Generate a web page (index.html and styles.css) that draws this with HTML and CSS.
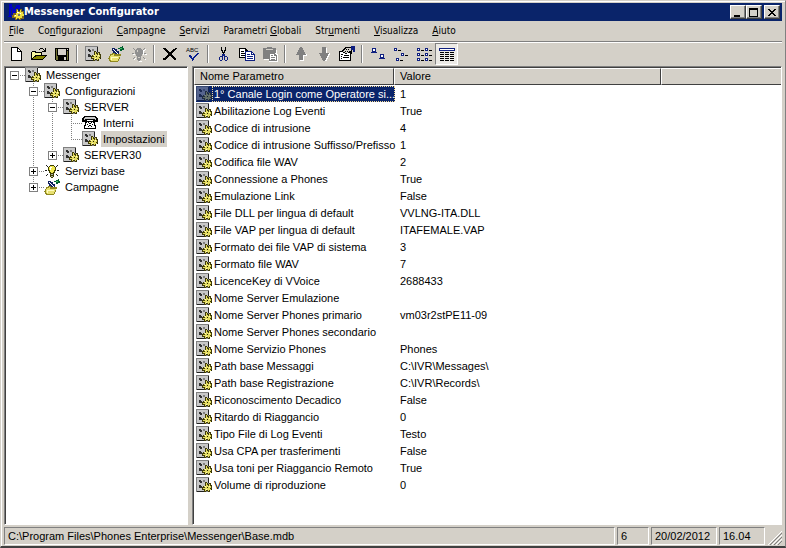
FILE: index.html
```html
<!DOCTYPE html>
<html lang="it">
<head>
    <meta charset="utf-8">
    <title>Messenger Configurator</title>
    <meta name="viewport" content="width=device-width, initial-scale=1">
    <link rel="stylesheet" href="styles.css">
</head>
<body>
    <svg class="sprite" width="0" height="0">
        <symbol id="gear" viewBox="0 0 16 16">
            <path fill="#808080" d="M0 0h13v15H0z"/>
            <path fill="#c8c8c8" d="M1 1h11v13H1z"/>
            <path fill="#202020" d="M12 1h1v5h-1zM1 14h7v1H1z"/>
            <path fill="#303030" d="M3 3h2v1h1v2H4V5H3zM3 8h2v1h1v2H3z"/>
            <path fill="#808080" d="M7 3h2v2H7z"/>
            <path fill="#403c08" d="M9 5h2v1h1v1h1V6h2v2h1v5h-2v2h-2v-1h-2v1H8v-2H6v-3h1V9h2z"/>
            <path fill="#e4dc60" d="M10 6h1v2h1v1h1V7h1v2h1v2h-1v1h1v1h-2v1h-1v-1h-2v1H9v-2H7v-1h2v-1H8V9h2z"/>
            <path fill="#fffcc0" d="M9 9h1v1H9zM13 9h1v1h-1zM10 12h1v1h-1z"/>
            <path fill="#202000" d="M11 10h1v1h-1zM15 12h1v1h-1z"/>
        </symbol>
        <symbol id="phone" viewBox="0 0 16 16">
            <path fill="#000" d="M2 1h12v1h1v1h1v4h-4V5H4v2H0V3h1V2h1z"/>
            <path fill="#c8c8c8" d="M3 2h10v1h1v2h-1V4H3v1H2V3h1z"/>
            <path fill="#000" d="M4 5h1v1h6V5h1v2h1v3h1v4H2v-4h1V7h1z"/>
            <path fill="#fff" d="M5 7h6v1h1v3h1v2H3v-2h1V8h1z"/>
            <path fill="#000" d="M6 7h1v1H6zM9 7h1v1H9zM7 8h2v1H7zM5 9h1v1H5zM10 9h1v1h-1zM7 10h2v1H7zM6 11h1v1H6zM9 11h1v1H9z"/>
        </symbol>
        <symbol id="bulb" viewBox="0 0 16 16">
            <path fill="#202020" d="M2 2h1v1h1v1H3V3H2zM12 3h1V2h1v1h-1v1h-1zM1 7h2v1H1zM13 7h2v1h-2zM2 12h1v-1h1v1H3v1H2zM12 11h1v1h1v1h-1v-1h-1z"/>
            <path fill="#404000" d="M6 2h4v1h1v1h1v4h-1v2h-1v4H9v1H7v-1H6v-4H5V8H4V4h1V3h1z"/>
            <path fill="#f0e850" d="M6 3h4v1h1v3h-1v2H9v1H7V9H6V7H5V4h1z"/>
            <path fill="#fff" d="M6 4h2v1H7v2H6z"/>
            <path fill="#b0b0b0" d="M7 11h2v1H7zM7 13h2v1H7z"/>
        </symbol>
        <symbol id="bulb-off" viewBox="0 0 16 16">
            <path fill="#fff" d="M3 3h1v1h1v1H4V4H3zM13 4h1V3h1v1h-1v1h-1zM2 8h2v1H2zM14 8h2v1h-2zM3 13h1v-1h1v1H4v1H3zM13 12h1v1h1v1h-1v-1h-1zM12 4h1v5h-1v2h-1v4H8v1h3v-5h1z"/>
            <path fill="#909090" d="M2 2h1v1h1v1H3V3H2zM12 3h1V2h1v1h-1v1h-1zM1 7h2v1H1zM13 7h2v1h-2zM2 12h1v-1h1v1H3v1H2zM12 11h1v1h1v1h-1v-1h-1z"/>
            <path fill="#909090" d="M6 2h4v1h1v1h1v4h-1v2h-1v4H9v1H7v-1H6v-4H5V8H4V4h1V3h1z"/>
            <path fill="#d4d0c8" d="M7 11h2v1H7zM6 4h1v2H6z"/>
        </symbol>
        <symbol id="campaign" viewBox="0 0 16 16">
            <path fill="#102060" d="M4 2h3v1h2v2h2v3h1v2H7V7H5V5H4z"/>
            <path fill="#fff" d="M5 3h1v1H5zM7 5h1v1H7zM6 4h1v1H6zM9 7h1v1H9zM8 6h1v1H8z"/>
            <path fill="#006030" d="M10 2h2V1h2V0h1v2h1v2h-2v1h-2V3h-2z"/>
            <path fill="#40c060" d="M12 2h2v1h-2z"/>
            <path fill="#908820" d="M0 12h1v-2h1V8h2V7h3v1h6v2h-1v3h-1v2h-1v1H2v-1H1v-2H0z"/>
            <path fill="#e8e070" d="M2 10h1V9h2V8h1v2h6v1h-1v2h-1v2H3v-1H2z"/>
            <path fill="#fffcc0" d="M3 11h7v1H4v2H3z"/>
        </symbol>
        <symbol id="app" viewBox="0 0 16 16">
            <path fill="#0000c8" d="M1 0h3v3h1v2h2V3h1V1h4v4h-2V4H9v3H7v1h2v4H4V5H3v7h2v1H0v-1h1V2z"/>
            <path fill="#806820" d="M8 5h2v2h2V5h2v2h2v8h-3v1h-2v-1H9v1H7v-2H4v-3h1V9h3z"/>
            <path fill="#f0e040" d="M9 6h1v2h2V6h1v2h2v2h1v2h-2v2h-2v1h-1v-1H9v1H8v-2H6v-2h2V9h1z"/>
            <path fill="#fff" d="M9 8h2v1H9zM12 9h1v1h-1zM7 11h1v1H7z"/>
            <path fill="#707070" d="M10 10h2v2h-2z"/>
        </symbol>
        <symbol id="new" viewBox="0 0 16 16">
            <path fill="#000" d="M3 1h7v1h1v1h1v1h1v1h1v10H3z"/>
            <path fill="#fff" d="M4 2h5v4h4v8H4zM10 3h1v1h1v1h-2z"/>
        </symbol>
        <symbol id="open" viewBox="0 0 16 16">
            <path fill="#000" d="M9 2h3v1h1v1h1V2h1v4h-4V5h2V4h-1V3H9v1H8V3h1zM1 5h4v1h6v3h5v1h-1v1h-1v1h-1v1h-1v1H0V6h1z"/>
            <path fill="#f8f8a0" d="M1 6h3v1h6v2H4v1H3v1H2v1H1z"/>
            <path fill="#848400" d="M5 10h9v1h-1v1h-1v1H2v-1h1v-1h2z"/>
        </symbol>
        <symbol id="save" viewBox="0 0 16 16">
            <path fill="#000" d="M1 2h14v13H2v-1H1z"/>
            <path fill="#707030" d="M2 3h1v7h1v1h8v-1h1V5h1v9H2z"/>
            <path fill="#d4d0c8" d="M4 3h8v6H4zM13 3h1v1h-1z"/>
            <path fill="#000" d="M4 10h9v4H4z"/>
            <path fill="#d4d0c8" d="M10 11h2v3h-2z"/>
        </symbol>
        <symbol id="delete" viewBox="0 0 16 16">
            <path fill="#000" d="M1 2h3v1h1v1h1v1h1v1h2V5h1V4h1V3h2V2h2v1h-1v1h-1v1h-1v1h-1v1h-1v2h1v1h1v1h1v1h1v2h-2v-1h-1v-1h-1v-1h-1v-1H7v1H6v1H5v1H4v1H1v-2h2v-1h1v-1h1V9h1V7H5V6H4V5H3V4H2V3H1z"/>
        </symbol>
        <symbol id="spell" viewBox="0 0 16 16">
            <text x="1" y="6" font-family="Liberation Sans, sans-serif" font-size="6" fill="#000">ABC</text>
            <path fill="#0a2090" d="M4 9h2v1h1v2h1v-1h1v-1h1V9h1V8h1V7h2v1h-1v1h-1v1h-1v1h-1v1h-1v2H8v1H7v-2H6v-1H5v-1H4z"/>
        </symbol>
        <symbol id="cut" viewBox="0 0 16 16">
            <path fill="#000" d="M5 1h1v3h1v2h1V4h1V1h1v4H9v2H8v2H7V7H6V5H5z"/>
            <path fill="#102080" d="M6 8h3v2h2v1h1v3h-1v1H9v-1H8v-4H7v4H6v1H4v-1H3v-3h1v-1h2z"/>
            <path fill="#d4d0c8" d="M4 11h2v3H4zM9 11h2v3H9z"/>
        </symbol>
        <symbol id="copy" viewBox="0 0 16 16">
            <path fill="#000" d="M0 2h7v1h1v1h1v8H0z"/>
            <path fill="#fff" d="M1 3h5v3h2v5H1z"/>
            <path fill="#000" d="M2 5h3v1H2zM2 7h4v1H2zM2 9h4v1H2z"/>
            <path fill="#102080" d="M6 5h7v1h1v1h1v1h1v7H6z"/>
            <path fill="#fff" d="M7 6h5v3h3v5H7zM13 7h1v1h-1z"/>
            <path fill="#102080" d="M8 8h3v1H8zM8 10h6v1H8zM8 12h6v1H8z"/>
        </symbol>
        <symbol id="paste" viewBox="0 0 16 16">
            <path fill="#fff" d="M14 4h1v4h1v8H7v-2H2v-1h5z"/>
            <path fill="#808080" d="M1 2h4V1h5v1h4v5H7v6H1V3z"/>
            <path fill="#d4d0c8" d="M4 3h7v1H4z"/>
            <path fill="#808080" d="M7 7h6v1h1v1h1v6H7z"/>
            <path fill="#fff" d="M8 8h4v2h2v4H8z"/>
            <path fill="#808080" d="M9 9h2v1H9zM9 11h4v1H9zM9 13h4v1H9z"/>
        </symbol>
        <symbol id="up" viewBox="0 0 16 16">
            <path fill="#fff" d="M9 2h1v2h1v2h1v2h2v2h-3v5H7v-1h3V9z"/>
            <path fill="#808080" d="M7 1h2v1h1v2h1v2h1v2h1v1h-3v5H6V9H3V8h1V6h1V4h1V2h1z"/>
        </symbol>
        <symbol id="down" viewBox="0 0 16 16">
            <path fill="#fff" d="M10 2h1v5h3v2h-1v2h-1v2h-1v2H9v-1h1z"/>
            <path fill="#808080" d="M6 1h4v6h3v1h-1v2h-1v2h-1v2H9v1H7v-1H6v-2H5v-2H4V8H3V7h3z"/>
        </symbol>
        <symbol id="props" viewBox="0 0 16 16">
            <path fill="#000" d="M0 5h3V4h1V3h1V2h1V1h7v7h-1v7H0z"/>
            <path fill="#fff" d="M1 6h3v1h2v1h2V7h3v7H1z"/>
            <path fill="#d4d0c8" d="M4 5h1V4h1V3h1V2h5v3h-2v1H9v1H6V6H4z"/>
            <path fill="#000" d="M7 3h1v1H7zM9 3h1v1H9zM6 5h1v1H6zM8 5h1v1H8zM2 8h2v1H2zM5 9h5v1H5zM2 10h1v1H2zM4 11h6v1H4zM2 12h1v1H2z"/>
            <path fill="#102080" d="M12 0h4v6h-2V4h-2z"/>
        </symbol>
        <symbol id="large" viewBox="0 0 16 16">
            <path fill="#102080" d="M2 2h4v4h1v1H1V6h1zM10 8h4v4h1v1H9v-1h1z"/>
            <path fill="#fff" d="M3 3h2v2H3zM11 9h2v2h-2z"/>
        </symbol>
        <symbol id="small" viewBox="0 0 16 16">
            <path fill="#102080" d="M1 2h3v3H1zM8 7h3v3H8zM3 12h3v3H3z"/>
            <path fill="#fff" d="M2 3h1v1H2zM9 8h1v1H9zM4 13h1v1H4z"/>
            <path fill="#000" d="M5 4h3v1H5zM12 9h3v1h-3zM7 14h3v1H7z"/>
        </symbol>
        <symbol id="list" viewBox="0 0 16 16">
            <path fill="#102080" d="M1 2h3v3H1zM9 2h3v3H9zM1 7h3v3H1zM9 7h3v3H9zM1 12h3v3H1zM9 12h3v3H9z"/>
            <path fill="#fff" d="M2 3h1v1H2zM10 3h1v1h-1zM2 8h1v1H2zM10 8h1v1h-1zM2 13h1v1H2zM10 13h1v1h-1z"/>
            <path fill="#000" d="M5 4h3v1H5zM13 4h3v1h-3zM5 9h3v1H5zM13 9h3v1h-3zM5 14h3v1H5zM13 14h3v1h-3z"/>
        </symbol>
        <symbol id="details" viewBox="0 0 16 16">
            <path fill="#102080" d="M0 2h16v3H0z"/>
            <path fill="#fff" d="M1 3h14v1H1z"/>
            <path fill="#000" d="M1 6h4v1H1zM6 6h4v1H6zM11 6h4v1h-4zM1 8h4v1H1zM6 8h4v1H6zM11 8h4v1h-4zM1 10h4v1H1zM6 10h4v1H6zM11 10h4v1h-4zM1 12h4v1H1zM6 12h4v1H6zM11 12h4v1h-4zM1 14h4v1H1zM6 14h4v1H6zM11 14h4v1h-4z"/>
        </symbol>
    </svg>

    <div class="window">
        <header class="titlebar">
            <svg class="icon"><use href="#app"/></svg>
            <h1>Messenger Configurator</h1>
            <button class="caption" aria-label="Riduci a icona"><svg width="10" height="9"><path d="M1 7h6v2H1z"/></svg></button>
            <button class="caption" aria-label="Ingrandisci"><svg width="10" height="9"><path d="M0 0h9v9H0zM1 2v6h7V2z" fill-rule="evenodd"/></svg></button>
            <button class="caption close" aria-label="Chiudi"><svg width="10" height="9"><path d="M1 1h2v1h1v1h2V2h1V1h2v1H8v1H7v1H6v1h1v1h1v1h1v1H7V7H6V6H4v1H3v1H1V7h1V6h1V5h1V4H3V3H2V2H1z"/></svg></button>
        </header>

        <nav class="menu">
            <button><u>F</u>ile</button>
            <button>Co<u>n</u>figurazioni</button>
            <button><u>C</u>ampagne</button>
            <button><u>S</u>ervizi</button>
            <button>Parametri <u>G</u>lobali</button>
            <button>Str<u>u</u>menti</button>
            <button><u>V</u>isualizza</button>
            <button><u>A</u>iuto</button>
        </nav>

        <div class="toolbar">
            <button aria-label="Nuovo"><svg class="icon"><use href="#new"/></svg></button>
            <button aria-label="Apri"><svg class="icon"><use href="#open"/></svg></button>
            <button aria-label="Salva"><svg class="icon"><use href="#save"/></svg></button>
            <span class="sep"></span>
            <button aria-label="Configurazione"><svg class="icon"><use href="#gear"/></svg></button>
            <button aria-label="Campagna"><svg class="icon"><use href="#campaign"/></svg></button>
            <button aria-label="Servizio" disabled><svg class="icon"><use href="#bulb-off"/></svg></button>
            <span class="sep"></span>
            <button aria-label="Elimina"><svg class="icon"><use href="#delete"/></svg></button>
            <button aria-label="Rinomina"><svg class="icon"><use href="#spell"/></svg></button>
            <span class="sep"></span>
            <button aria-label="Taglia"><svg class="icon"><use href="#cut"/></svg></button>
            <button aria-label="Copia"><svg class="icon"><use href="#copy"/></svg></button>
            <button aria-label="Incolla" disabled><svg class="icon"><use href="#paste"/></svg></button>
            <span class="sep"></span>
            <button aria-label="Su" disabled><svg class="icon"><use href="#up"/></svg></button>
            <button aria-label="Giù" disabled><svg class="icon"><use href="#down"/></svg></button>
            <button aria-label="Proprietà"><svg class="icon"><use href="#props"/></svg></button>
            <span class="sep"></span>
            <button aria-label="Icone grandi"><svg class="icon"><use href="#large"/></svg></button>
            <button aria-label="Icone piccole"><svg class="icon"><use href="#small"/></svg></button>
            <button aria-label="Elenco"><svg class="icon"><use href="#list"/></svg></button>
            <button class="pressed" aria-label="Dettagli"><svg class="icon"><use href="#details"/></svg></button>
        </div>

        <main class="content">
            <div class="panel tree">
                <ul>
                    <li>
                        <div class="node"><span class="branch"><button class="toggle open" aria-label="Comprimi"></button></span><svg class="icon"><use href="#gear"/></svg><span class="label">Messenger</span></div>
                        <ul>
                            <li>
                                <div class="node"><span class="branch"><button class="toggle open" aria-label="Comprimi"></button></span><svg class="icon"><use href="#gear"/></svg><span class="label">Configurazioni</span></div>
                                <ul>
                                    <li>
                                        <div class="node"><span class="branch"><button class="toggle open" aria-label="Comprimi"></button></span><svg class="icon"><use href="#gear"/></svg><span class="label">SERVER</span></div>
                                        <ul>
                                            <li><div class="node"><span class="branch"></span><svg class="icon"><use href="#phone"/></svg><span class="label">Interni</span></div></li>
                                            <li><div class="node"><span class="branch"></span><svg class="icon"><use href="#gear"/></svg><span class="label current">Impostazioni</span></div></li>
                                        </ul>
                                    </li>
                                    <li>
                                        <div class="node"><span class="branch"><button class="toggle" aria-label="Espandi"></button></span><svg class="icon"><use href="#gear"/></svg><span class="label">SERVER30</span></div>
                                    </li>
                                </ul>
                            </li>
                            <li>
                                <div class="node"><span class="branch"><button class="toggle" aria-label="Espandi"></button></span><svg class="icon"><use href="#bulb"/></svg><span class="label">Servizi base</span></div>
                            </li>
                            <li>
                                <div class="node"><span class="branch"><button class="toggle" aria-label="Espandi"></button></span><svg class="icon"><use href="#campaign"/></svg><span class="label">Campagne</span></div>
                            </li>
                        </ul>
                    </li>
                </ul>
            </div>

            <div class="panel list">
                <table>
                    <colgroup>
                        <col class="col-name">
                        <col class="col-value">
                        <col>
                    </colgroup>
                    <thead>
                        <tr><th>Nome Parametro</th><th>Valore</th><th></th></tr>
                    </thead>
                    <tbody>
                        <tr class="selected"><td><div class="item"><svg class="icon"><use href="#gear"/></svg><span>1° Canale Login come Operatore si...</span></div></td><td>1</td><td></td></tr>
                        <tr><td><div class="item"><svg class="icon"><use href="#gear"/></svg><span>Abilitazione Log Eventi</span></div></td><td>True</td><td></td></tr>
                        <tr><td><div class="item"><svg class="icon"><use href="#gear"/></svg><span>Codice di intrusione</span></div></td><td>4</td><td></td></tr>
                        <tr><td><div class="item"><svg class="icon"><use href="#gear"/></svg><span>Codice di intrusione Suffisso/Prefisso</span></div></td><td>1</td><td></td></tr>
                        <tr><td><div class="item"><svg class="icon"><use href="#gear"/></svg><span>Codifica file WAV</span></div></td><td>2</td><td></td></tr>
                        <tr><td><div class="item"><svg class="icon"><use href="#gear"/></svg><span>Connessione a Phones</span></div></td><td>True</td><td></td></tr>
                        <tr><td><div class="item"><svg class="icon"><use href="#gear"/></svg><span>Emulazione Link</span></div></td><td>False</td><td></td></tr>
                        <tr><td><div class="item"><svg class="icon"><use href="#gear"/></svg><span>File DLL per lingua di default</span></div></td><td>VVLNG-ITA.DLL</td><td></td></tr>
                        <tr><td><div class="item"><svg class="icon"><use href="#gear"/></svg><span>File VAP per lingua di default</span></div></td><td>ITAFEMALE.VAP</td><td></td></tr>
                        <tr><td><div class="item"><svg class="icon"><use href="#gear"/></svg><span>Formato dei file VAP di sistema</span></div></td><td>3</td><td></td></tr>
                        <tr><td><div class="item"><svg class="icon"><use href="#gear"/></svg><span>Formato file WAV</span></div></td><td>7</td><td></td></tr>
                        <tr><td><div class="item"><svg class="icon"><use href="#gear"/></svg><span>LicenceKey di VVoice</span></div></td><td>2688433</td><td></td></tr>
                        <tr><td><div class="item"><svg class="icon"><use href="#gear"/></svg><span>Nome Server Emulazione</span></div></td><td></td><td></td></tr>
                        <tr><td><div class="item"><svg class="icon"><use href="#gear"/></svg><span>Nome Server Phones primario</span></div></td><td>vm03r2stPE11-09</td><td></td></tr>
                        <tr><td><div class="item"><svg class="icon"><use href="#gear"/></svg><span>Nome Server Phones secondario</span></div></td><td></td><td></td></tr>
                        <tr><td><div class="item"><svg class="icon"><use href="#gear"/></svg><span>Nome Servizio Phones</span></div></td><td>Phones</td><td></td></tr>
                        <tr><td><div class="item"><svg class="icon"><use href="#gear"/></svg><span>Path base Messaggi</span></div></td><td>C:\IVR\Messages\</td><td></td></tr>
                        <tr><td><div class="item"><svg class="icon"><use href="#gear"/></svg><span>Path base Registrazione</span></div></td><td>C:\IVR\Records\</td><td></td></tr>
                        <tr><td><div class="item"><svg class="icon"><use href="#gear"/></svg><span>Riconoscimento Decadico</span></div></td><td>False</td><td></td></tr>
                        <tr><td><div class="item"><svg class="icon"><use href="#gear"/></svg><span>Ritardo di Riaggancio</span></div></td><td>0</td><td></td></tr>
                        <tr><td><div class="item"><svg class="icon"><use href="#gear"/></svg><span>Tipo File di Log Eventi</span></div></td><td>Testo</td><td></td></tr>
                        <tr><td><div class="item"><svg class="icon"><use href="#gear"/></svg><span>Usa CPA per trasferimenti</span></div></td><td>False</td><td></td></tr>
                        <tr><td><div class="item"><svg class="icon"><use href="#gear"/></svg><span>Usa toni per Riaggancio Remoto</span></div></td><td>True</td><td></td></tr>
                        <tr><td><div class="item"><svg class="icon"><use href="#gear"/></svg><span>Volume di riproduzione</span></div></td><td>0</td><td></td></tr>
                    </tbody>
                </table>
            </div>
        </main>

        <footer class="statusbar">
            <span class="path">C:\Program Files\Phones Enterprise\Messenger\Base.mdb</span>
            <span class="count">6</span>
            <span class="date">20/02/2012</span>
            <span class="time">16.04</span>
            <svg class="grip" width="15" height="15" viewBox="0 0 15 15">
                <path stroke="#fff" d="M1 15L15 1M5 15L15 5M9 15L15 9"/>
                <path stroke="#808080" d="M3 15L15 3M7 15L15 7M11 15L15 11"/>
            </svg>
        </footer>
    </div>
</body>
</html>
```

FILE: styles.css
```css
* {
    box-sizing: border-box;
}
body {
    margin: 0;
    font-family: "Liberation Sans", Arial, sans-serif;
    font-size: 11px;
    line-height: 16px;
    color: #000;
    background-color: #d4d0c8;
}
button {
    margin: 0;
    padding: 0;
    border: none;
    background: none;
    color: inherit;
    font: inherit;
}
.sprite {
    display: block;
}
.icon {
    display: block;
    flex: none;
    width: 16px;
    height: 16px;
    shape-rendering: crispEdges;
}
.window {
    display: flex;
    flex-direction: column;
    min-height: 100vh;
    padding: 2px 3px 0 3px;
    border: 1px solid #d4d0c8;
    border-right: 1px solid #808080;
    border-bottom: 2px solid #404040;
    box-shadow: inset 1px 1px 0 #fff;
}

/* title bar */
.titlebar {
    display: flex;
    align-items: center;
    height: 18px;
    padding: 0 2px 0 4px;
    background-color: #0a246a;
    color: #fff;
}
.titlebar h1 {
    flex: 1;
    margin: 0;
    font-family: "DejaVu Sans Condensed", Tahoma, sans-serif;
    font-size: 11px;
    font-weight: bold;
}
.caption {
    display: flex;
    align-items: center;
    justify-content: center;
    width: 16px;
    height: 14px;
    background-color: #d4d0c8;
    border: 1px solid;
    border-color: #fff #404040 #404040 #fff;
    box-shadow: inset -1px -1px 0 #808080;
    shape-rendering: crispEdges;
}
.close {
    margin-left: 2px;
}

/* menu */
.menu {
    display: flex;
    gap: 4px;
    height: 20px;
    font-family: "DejaVu Sans Condensed", Tahoma, sans-serif;
    font-size: 10px;
}
.menu button {
    padding: 0 5px;
}

/* toolbar */
.toolbar {
    display: flex;
    align-items: center;
    height: 25px;
    border-top: 1px solid #808080;
    box-shadow: inset 0 1px 0 #fff;
}
.toolbar button {
    display: flex;
    align-items: center;
    justify-content: center;
    width: 23px;
    height: 22px;
}
.toolbar .pressed {
    background-color: #eceae6;
    border: 1px solid;
    border-color: #808080 #fff #fff #808080;
}
.sep {
    width: 2px;
    height: 18px;
    margin: 0 3px;
    border-left: 1px solid #808080;
    border-right: 1px solid #fff;
}

/* panels */
.content {
    display: flex;
    flex: 1;
    gap: 4px;
}
.panel {
    background-color: #fff;
    border: 1px solid;
    border-color: #808080 #fff #fff #808080;
    box-shadow: inset 1px 1px 0 #404040;
}

/* tree */
.tree {
    flex: none;
    width: 184px;
    padding: 0 0 0 1px;
}
.tree ul {
    margin: 0;
    padding: 0;
    list-style: none;
}
.tree ul ul {
    padding-left: 19px;
}
.tree ul ul > li {
    background: repeating-linear-gradient(to bottom, #808080 0 1px, transparent 1px 2px) 8px 0 / 1px 100% no-repeat;
}
.tree ul ul > li:last-child {
    background-size: 1px 8px;
}
.node {
    display: flex;
    align-items: center;
    height: 16px;
}
.branch {
    display: flex;
    align-items: center;
    width: 19px;
    height: 16px;
    padding-left: 4px;
    background: repeating-linear-gradient(to right, #808080 0 1px, transparent 1px 2px) 8px 8px / 11px 1px no-repeat;
}
.toggle {
    width: 9px;
    height: 9px;
    border: 1px solid #808080;
    background:
        linear-gradient(#000, #000) center / 5px 1px no-repeat,
        linear-gradient(#000, #000) center / 1px 5px no-repeat,
        #fff;
}
.toggle.open {
    background: linear-gradient(#000, #000) center / 5px 1px no-repeat, #fff;
}
.label {
    margin-left: 3px;
    padding: 0 2px;
    white-space: nowrap;
}
.current {
    background-color: #d4d0c8;
}

/* parameter list */
.list {
    flex: 1;
    min-width: 0;
    padding: 1px 0 0 1px;
}
table {
    width: 100%;
    table-layout: fixed;
    border-collapse: separate;
    border-spacing: 0;
}
.col-name {
    width: 200px;
}
.col-value {
    width: 267px;
}
th {
    height: 17px;
    padding: 0 5px;
    line-height: 15px;
    background-color: #d4d0c8;
    border: 1px solid;
    border-color: #fff #404040 #404040 #fff;
    font-weight: normal;
    text-align: left;
}
th:last-child {
    border-right: none;
}
td {
    height: 17px;
    padding: 0 6px;
    white-space: nowrap;
}
td:first-child {
    padding: 0 0 0 2px;
}
.item {
    display: flex;
    align-items: center;
    height: 17px;
}
.item span {
    padding-left: 2px;
}
.selected .item span {
    flex: 1;
    background-color: #0a246a;
    color: #fff;
    outline: 1px dotted #f5db95;
    outline-offset: -1px;
}
.selected .icon {
    background-color: #0a246a;
}
.selected .icon use {
    opacity: 0.4;
}

/* status bar */
.statusbar {
    display: flex;
    gap: 2px;
    padding: 2px 0 1px 0;
}
.statusbar span {
    height: 18px;
    padding: 0 3px;
    border: 1px solid;
    border-color: #808080 #fff #fff #808080;
    white-space: nowrap;
}
.path {
    flex: 1;
}
.count {
    width: 32px;
}
.date {
    width: 66px;
}
.time {
    width: 46px;
}
.grip {
    align-self: flex-end;
}
```
